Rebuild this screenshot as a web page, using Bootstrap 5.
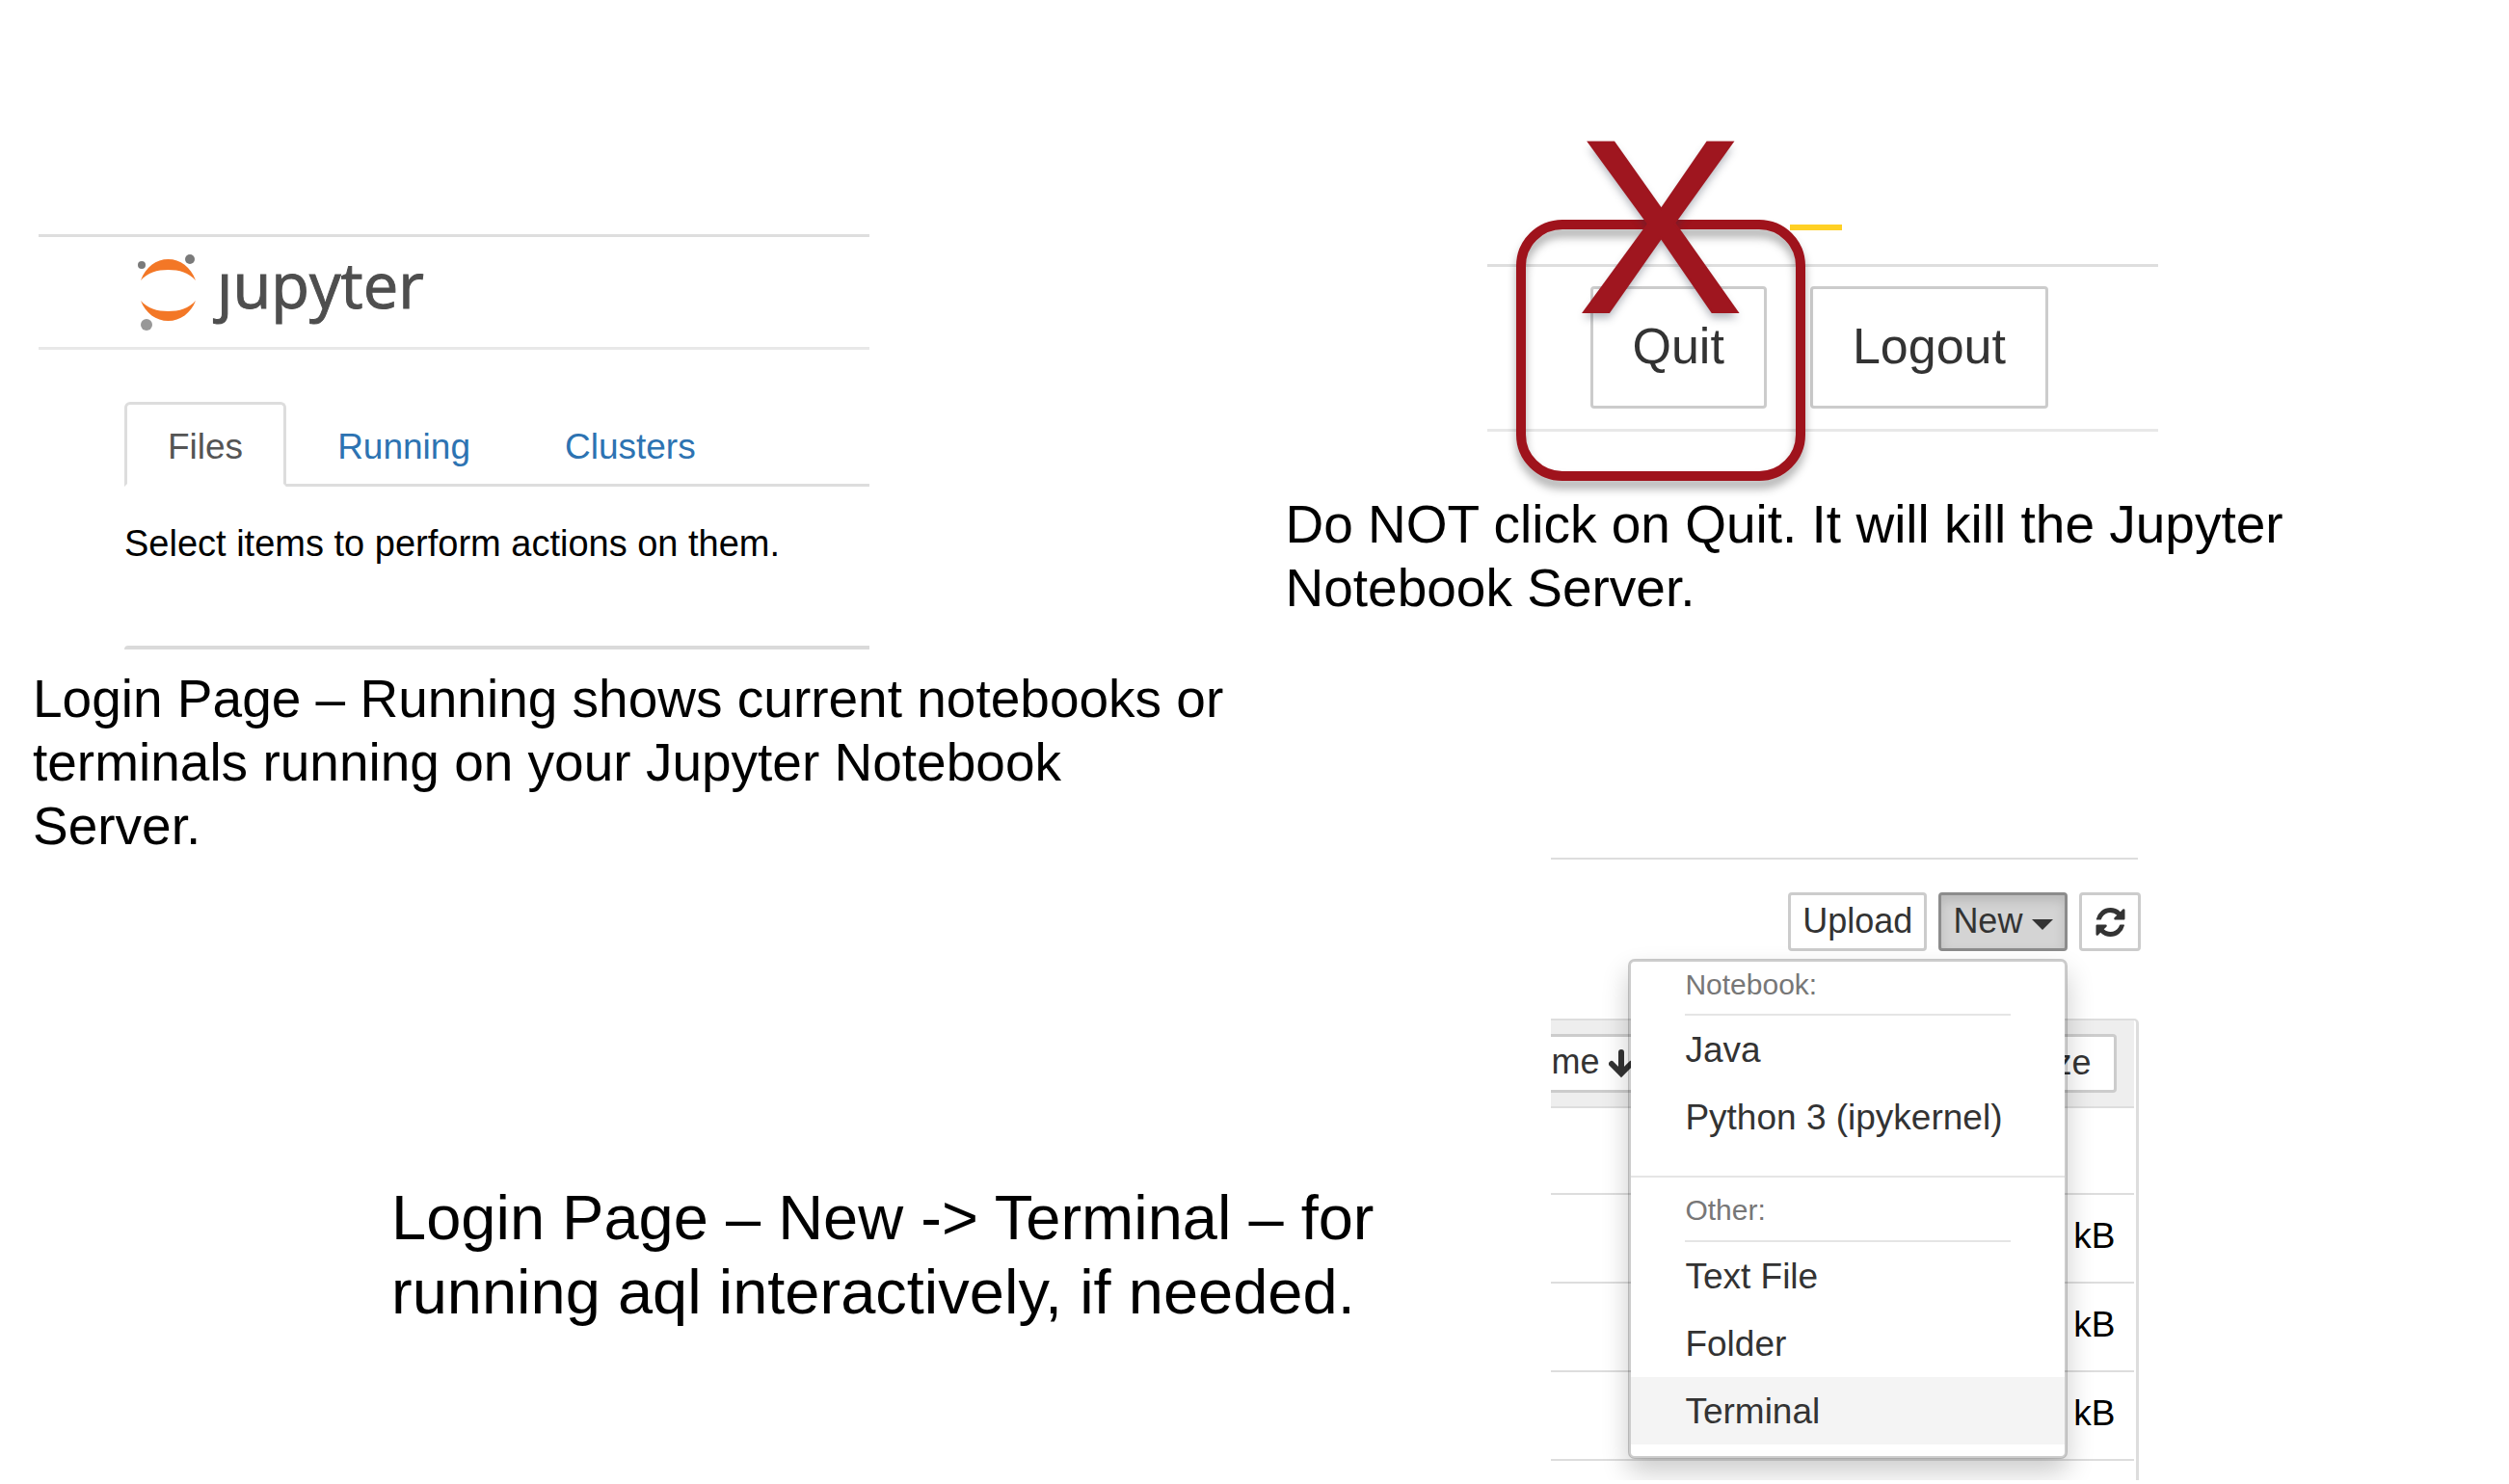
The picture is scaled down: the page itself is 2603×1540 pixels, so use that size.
<!DOCTYPE html>
<html lang="en">
<head>
<meta charset="utf-8">
<meta name="viewport" content="width=device-width, initial-scale=1">
<title>Jupyter login page notes</title>
<link rel="stylesheet" href="https://cdn.jsdelivr.net/npm/bootstrap@5.3.0/dist/css/bootstrap.min.css">
<style>
  body { background: #fff; color: #000; font-family: "Liberation Sans", Arial, sans-serif; overflow-x: hidden; }
  .caption-md { font-size: 55px; line-height: 66px; margin: 0; }
  .caption-lg { font-size: 65px; line-height: 77px; margin: 335px 0 0 406px; }

  /* files page */
  .files-col { padding: 243px 30px 0 34px; }
  .files-shot { width: 862px; margin-left: 6px; }
  .brand-bar { height: 120px; border-top: 3px solid #dedede; border-bottom: 3px solid #e8e8e8; padding-left: 103px; }
  .brand-name { font: 65px/80px "Open Sans", "Noto Sans", sans-serif; color: #4e4e4e; margin-left: 20px; padding-bottom: 16px; -webkit-text-stroke: 1px #4e4e4e; }
  .files-body { padding: 54px 0 0 89px; }
  .file-tabs { border-bottom: 3px solid #ddd; }
  .file-tabs .nav-item { margin-right: 8px; }
  .file-tabs .nav-link { border: 3px solid transparent; margin-bottom: -3px; padding: 23px 42px 17px; border-radius: 6px 6px 0 0; font-size: 37px; line-height: 42px; color: #2d73b2; }
  .file-tabs .nav-link.active { color: #555; border-color: #ddd #ddd #fff; }
  .hint { font-size: 38px; line-height: 42px; margin: 38px 0 85px; }
  .list-edge { height: 4px; background: #dadada; border-top-left-radius: 4px; margin-bottom: 18px; }

  /* quit / logout bar */
  .quit-col { padding: 274px 32px 0; }
  .quit-bar { width: 696px; margin: 0 0 63px 209px; padding: 20px 0 21px 107px; gap: 45px; border-top: 3px solid #dedede; border-bottom: 3px solid #e8e8e8; }
  .btn-big { border: 3px solid #ccc; border-radius: 4px; background: #fff; color: #333; font-size: 52px; line-height: 58px; padding: 30px 41px 33px; }
  .stop-ring { left: 30px; top: -49px; width: 300px; height: 271px; border: 10px solid #9f131c; border-radius: 48px; filter: drop-shadow(0 8px 5px rgba(0,0,0,.32)); pointer-events: none; }
  .stop-x { left: 30px; top: -167px; width: 300px; text-align: center; font-size: 256px; line-height: 250px; color: #9f161f; -webkit-text-stroke: 2px #9f161f; text-shadow: 0 6px 8px rgba(40,50,70,.35); pointer-events: none; }
  .marker { left: 314px; top: -44px; width: 54px; height: 6px; background: #ffd024; }

  /* new menu */
  .menu-shot { width: 612px; height: 646px; margin-left: 91px; overflow: hidden; font-size: 36px; line-height: 42px; }
  .tool-row { padding-top: 34px; gap: 12px; margin-bottom: 70px; }
  .tool-edge { border-top: 2px solid #ddd; margin-right: 3px; }
  .btn-tool { border: 3px solid #ccc; border-radius: 4px; background: #fff; color: #333; font-size: 36px; line-height: 42px; padding: 6px 12px 7px; height: 61px; }
  .btn-tool.active-tool { border-color: #8c8c8c; background: #d4d4d4; box-shadow: inset 0 6px 12px rgba(0,0,0,.125); gap: 10px; }
  .caret-down { width: 0; height: 0; border: 11px solid transparent; border-top-color: #333; border-bottom: 0; margin-top: 7px; }
  .btn-icon { width: 64px; padding: 0; }
  .file-frame { border-top: 2px solid #ddd; border-right: 3px solid #ddd; border-top-right-radius: 5px; margin-right: 2px; padding-right: 2px; height: 479px; }
  .file-table { width: 100%; border-collapse: separate; border-spacing: 0; font-size: 37px; }
  .file-table th { background: #eee; padding: 14px 0; border-bottom: 2px solid #ddd; font-weight: 400; }
  .file-table td { border-bottom: 2px solid #ddd; padding: 22px 20px 26px 0; text-align: right; }
  .file-table .blank-row td { height: 90px; padding: 0; }
  .btn-sort { border: 3px solid #ccc; background: #fff; color: #333; height: 61px; font-size: 36px; line-height: 42px; padding: 5px 24px 7px; }
  .sort-name { border-left: 0; padding: 5px 20px 7px 0; gap: 10px; }
  .sort-size { border-radius: 4px; margin-right: 18px; }
  .new-menu { left: 80px; top: 105px; width: 456px; padding: 0 0 12px; border: 3px solid rgba(0,0,0,.2); border-radius: 7px; background: #fff; box-shadow: 0 14px 28px rgba(0,0,0,.2); background-clip: padding-box; }
  .new-menu .group-name { font-size: 30px; line-height: 34px; color: #777; margin: 0 56px; padding: 7px 0 13px; border-bottom: 2px solid #e5e5e5; }
  .new-menu .group-other { padding: 17px 0 14px; }
  .new-menu .dropdown-item { font-size: 37px; line-height: 42px; padding: 15px 56px 13px; color: #333; }
  .new-menu .dropdown-item.hovered { background: #f4f4f4; }
  .new-menu .dropdown-divider { margin: 26px 0 0; border-top: 2px solid #e5e5e5; opacity: 1; }
</style>
</head>
<body>
<main>
  <div class="row g-0">
    <section class="col-6 files-col">
      <div class="files-shot">
        <div class="brand-bar d-flex align-items-center">
          <svg width="62" height="80" viewBox="0 0 62 80" aria-hidden="true">
            <path d="M3 28C8 14 19 6 31.500 6S55 14 60 28C53 20 43 17 31.500 17S10 20 3 28Z" fill="#f37726"/>
            <path d="M3 49C8 62 19 70 31.500 70S55 62 60 49C53 57 43 60 31.500 60S10 57 3 49Z" fill="#f37726"/>
            <circle cx="4" cy="12" r="4" fill="#7a7a7a"/>
            <circle cx="54" cy="6" r="5" fill="#7a7a7a"/>
            <circle cx="9" cy="74" r="6" fill="#989898"/>
          </svg>
          <span class="brand-name">ȷupyter</span>
        </div>
        <div class="files-body">
          <ul class="nav nav-tabs file-tabs">
            <li class="nav-item"><a class="nav-link active" href="#files">Files</a></li>
            <li class="nav-item"><a class="nav-link" href="#running">Running</a></li>
            <li class="nav-item"><a class="nav-link" href="#clusters">Clusters</a></li>
          </ul>
          <p class="hint">Select items to perform actions on them.</p>
          <div class="list-edge"></div>
        </div>
      </div>
      <p class="caption-md">Login Page – Running shows current notebooks or terminals running on your Jupyter Notebook Server.</p>
    </section>

    <section class="col-6 quit-col">
      <div class="quit-bar d-flex position-relative">
        <button type="button" class="btn-big">Quit</button>
        <button type="button" class="btn-big">Logout</button>
        <div class="marker position-absolute"></div>
        <div class="stop-ring position-absolute"></div>
        <div class="stop-x position-absolute">X</div>
      </div>
      <p class="caption-md">Do NOT click on Quit. It will kill the Jupyter Notebook Server.</p>
    </section>
  </div>

  <div class="row g-0">
    <section class="col-7">
      <p class="caption-lg">Login Page – New -&gt; Terminal – for running aql interactively, if needed.</p>
    </section>
    <section class="col-5">
      <div class="menu-shot position-relative">
        <div class="tool-edge"></div>
        <div class="tool-row d-flex justify-content-end">
          <button type="button" class="btn-tool">Upload</button>
          <button type="button" class="btn-tool active-tool d-flex align-items-center" aria-expanded="true">New<span class="caret-down"></span></button>
          <button type="button" class="btn-tool btn-icon d-flex align-items-center justify-content-center" aria-label="Refresh">
            <svg width="31" height="30" viewBox="0 0 1536 1536" fill="#333"><path d="M1511 928q0 5-1 7q-64 268-268 434.500t-478 166.500q-146 0-282.500-55t-243.500-157l-129 129q-19 19-45 19t-45-19t-19-45v-448q0-26 19-45t45-19h448q26 0 45 19t19 45t-19 45l-137 137q71 66 161 102t187 36q134 0 250-65t186-179q11-17 53-117q8-23 30-23h192q13 0 22.500 9.500t9.500 22.500zM1536 128v448q0 26-19 45t-45 19h-448q-26 0-45-19t-19-45t19-45l138-138q-148-137-349-137q-134 0-250 65t-186 179q-11 17-53 117q-8 23-30 23h-199q-13 0-22.500-9.500t-9.500-22.500v-7q65-268 270-434.500t480-166.500q146 0 284 55.500t245 156.500l130-129q19-19 45-19t45 19t19 45z"/></svg>
          </button>
        </div>
        <div class="file-frame">
          <table class="file-table">
            <thead>
              <tr><th>
                <div class="d-flex justify-content-between">
                  <button type="button" class="btn-sort sort-name d-flex">me
                    <svg width="26" height="30" viewBox="0 0 26 30" class="mt-2" aria-hidden="true"><path d="M13 3V24M3 15L13 25L23 15" fill="none" stroke="#333" stroke-width="6" stroke-linecap="round"/></svg>
                  </button>
                  <button type="button" class="btn-sort sort-size">ze</button>
                </div>
              </th></tr>
            </thead>
            <tbody>
              <tr class="blank-row"><td></td></tr>
              <tr><td>kB</td></tr>
              <tr><td>kB</td></tr>
              <tr><td>kB</td></tr>
            </tbody>
          </table>
        </div>
        <div class="dropdown-menu new-menu show">
          <div class="group-name">Notebook:</div>
          <a class="dropdown-item" href="#java">Java</a>
          <a class="dropdown-item" href="#python">Python 3 (ipykernel)</a>
          <hr class="dropdown-divider">
          <div class="group-name group-other">Other:</div>
          <a class="dropdown-item" href="#text">Text File</a>
          <a class="dropdown-item" href="#folder">Folder</a>
          <a class="dropdown-item hovered" href="#terminal">Terminal</a>
        </div>
      </div>
    </section>
  </div>
</main>
<script src="https://cdn.jsdelivr.net/npm/bootstrap@5.3.0/dist/js/bootstrap.bundle.min.js"></script>
</body>
</html>
